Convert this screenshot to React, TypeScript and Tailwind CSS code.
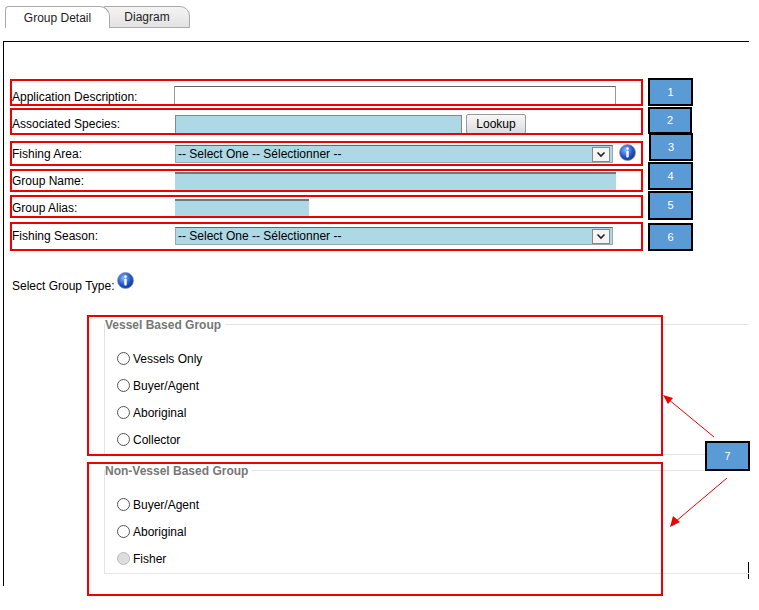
import React from "react";

const font = { fontFamily: '"Liberation Sans", Arial, sans-serif' };

function Info({ className = "" }: { className?: string }) {
  return (
    <svg width="17" height="17" viewBox="0 0 17 17" className={className}>
      <defs>
        <radialGradient id="ig" cx="40%" cy="35%" r="70%">
          <stop offset="0%" stopColor="#8fb8ff" />
          <stop offset="60%" stopColor="#2256c8" />
          <stop offset="100%" stopColor="#0d2f86" />
        </radialGradient>
      </defs>
      <circle cx="8.5" cy="8.5" r="8" fill="url(#ig)" stroke="#8a9bb8" strokeWidth="0.8" />
      <circle cx="8.5" cy="4.6" r="1.3" fill="#fff" />
      <rect x="7.3" y="6.7" width="2.4" height="6.8" rx="0.8" fill="#fff" />
    </svg>
  );
}

function Chevron() {
  return (
    <div className="w-[18px] h-[15px] border border-[#888] bg-[#f4f4f4] flex items-center justify-center">
      <svg width="10" height="7" viewBox="0 0 10 7">
        <path d="M1.5 1.5 L5 5 L8.5 1.5" stroke="#222" strokeWidth="1.6" fill="none" />
      </svg>
    </div>
  );
}

function Sel({ w }: { w: string }) {
  return (
    <div className={`${w} h-[18px] bg-[#add8e6] border border-[#9aa] border-t-[#666] flex items-center justify-between pl-[2px] pr-[2px] text-[12px] text-black`}>
      <span>-- Select One -- Sélectionner --</span>
      <Chevron />
    </div>
  );
}

function Radio({ label, disabled }: { label: string; disabled?: boolean }) {
  return (
    <div className="flex items-center h-[27px] text-[12px] text-black">
      <span className={`w-[13px] h-[13px] rounded-full border ${disabled ? "border-[#bbb] bg-[#ddd]" : "border-[#555] bg-white"} mr-[3px]`} />
      {label}
    </div>
  );
}

const Num = ({ n, cls }: { n: string; cls: string }) => (
  <div className={`absolute ${cls} bg-[#5b9bd5] border-2 border-black text-white text-[11px] flex items-center justify-center`}>{n}</div>
);

export default function App() {
  return (
    <div className="relative w-[759px] h-[610px] bg-white overflow-hidden" style={font}>
      {/* tabs */}
      <div className="absolute left-[5px] top-[6px] flex">
        <div className="relative z-10 w-[105px] h-[22px] bg-white border border-[#aaa] border-b-0 rounded-tl-[4px] rounded-tr-[10px] text-[12px] flex items-center justify-center text-[#222]">Group Detail</div>
        <div className="-ml-[6px] w-[86px] h-[22px] bg-gradient-to-b from-[#f4f4f4] to-[#e2e2e2] border border-[#aaa] rounded-tr-[10px] text-[12px] flex items-center justify-center text-[#222]">Diagram</div>
      </div>
      {/* content frame */}
      <div className="absolute left-[3px] top-[41px] w-[746px] h-[545px] border-t border-l border-black" />
      <div className="absolute left-[748px] top-[562px] w-px h-[17px] bg-black" />

      {/* form rows */}
      <div className="absolute left-[12px] top-[84px] text-[12px] text-black">
        <div className="flex items-center h-[22px]">
          <span className="w-[162px] pt-[4px]">Application Description:</span>
          <div className="w-[442px] h-[19px] border border-[#999] border-t-[#666] bg-white" />
        </div>
        <div className="flex items-center h-[22px] mt-[7px]">
          <span className="w-[163px]">Associated Species:</span>
          <div className="w-[287px] h-[19px] bg-[#add8e6] border border-[#888]" />
          <div className="ml-[4px] w-[60px] h-[20px] border border-[#999] rounded-[2px] bg-gradient-to-b from-[#f8f8f8] to-[#dcdcdc] flex items-center justify-center">Lookup</div>
        </div>
        <div className="flex items-center h-[22px] mt-[8px]">
          <span className="w-[163px]">Fishing Area:</span>
          <Sel w="w-[438px]" />
          <Info className="ml-[6px] -mt-[4px]" />
        </div>
        <div className="flex items-center h-[22px] mt-[5px]">
          <span className="w-[163px]">Group Name:</span>
          <div className="w-[441px] h-[18px] bg-[#add8e6] border-t-2 border-[#777]" />
        </div>
        <div className="flex items-center h-[22px] mt-[5px]">
          <span className="w-[163px]">Group Alias:</span>
          <div className="w-[134px] h-[18px] bg-[#add8e6] border-t-2 border-[#777]" />
        </div>
        <div className="flex items-center h-[22px] mt-[6px]">
          <span className="w-[163px]">Fishing Season:</span>
          <Sel w="w-[438px]" />
        </div>
        <div className="flex items-end mt-[25px]">
          <span className="mb-[-2px]">Select Group Type:</span>
          <Info className="ml-[2px] mb-[4px]" />
        </div>
      </div>

      {/* fieldsets */}
      <div className="absolute left-[104px] top-[324px] w-[645px] h-[131px] border-l border-t border-b border-[#e4e4e4]">
        <div className="absolute -top-[7px] left-[0px] bg-white px-[0px] pr-[4px] text-[12px] font-bold text-[#777] leading-[14px]">Vessel Based Group</div>
        <div className="absolute left-[12px] top-[20px]">
          <Radio label="Vessels Only" />
          <Radio label="Buyer/Agent" />
          <Radio label="Aboriginal" />
          <Radio label="Collector" />
        </div>
      </div>
      <div className="absolute left-[104px] top-[470px] w-[645px] h-[104px] border-l border-t border-b border-[#e4e4e4]">
        <div className="absolute -top-[7px] left-[0px] bg-white pr-[4px] text-[12px] font-bold text-[#777] leading-[14px]">Non-Vessel Based Group</div>
        <div className="absolute left-[12px] top-[20px]">
          <Radio label="Buyer/Agent" />
          <Radio label="Aboriginal" />
          <Radio label="Fisher" disabled />
        </div>
      </div>

      {/* annotation red boxes */}
      <div className="absolute left-[10px] top-[79px] w-[633px] h-[27px] border-2 border-[#e00]" />
      <div className="absolute left-[10px] top-[108px] w-[633px] h-[27px] border-2 border-[#e00]" />
      <div className="absolute left-[10px] top-[141px] w-[633px] h-[25px] border-2 border-[#e00]" />
      <div className="absolute left-[10px] top-[169px] w-[633px] h-[23px] border-2 border-[#e00]" />
      <div className="absolute left-[10px] top-[195px] w-[633px] h-[23px] border-2 border-[#e00]" />
      <div className="absolute left-[10px] top-[222px] w-[633px] h-[29px] border-2 border-[#e00]" />
      <div className="absolute left-[87px] top-[315px] w-[576px] h-[141px] border-2 border-[#e00]" />
      <div className="absolute left-[87px] top-[462px] w-[576px] h-[134px] border-2 border-[#e00]" />

      <Num n="1" cls="left-[648px] top-[78px] w-[45px] h-[28px]" />
      <Num n="2" cls="left-[648px] top-[107px] w-[44px] h-[27px]" />
      <Num n="3" cls="left-[649px] top-[133px] w-[44px] h-[28px]" />
      <Num n="4" cls="left-[648px] top-[162px] w-[45px] h-[28px]" />
      <Num n="5" cls="left-[648px] top-[191px] w-[45px] h-[29px]" />
      <Num n="6" cls="left-[648px] top-[223px] w-[45px] h-[28px]" />
      <Num n="7" cls="left-[705px] top-[441px] w-[45px] h-[30px]" />

      <svg className="absolute left-0 top-0" width="759" height="610">
        <line x1="714" y1="437" x2="668" y2="399" stroke="#e00" strokeWidth="1" />
        <polygon points="663,395 673,398 668,404" fill="#e00" />
        <line x1="727" y1="478" x2="675" y2="522" stroke="#e00" strokeWidth="1" />
        <polygon points="670,527 673,516 680,522" fill="#e00" />
      </svg>
    </div>
  );
}
